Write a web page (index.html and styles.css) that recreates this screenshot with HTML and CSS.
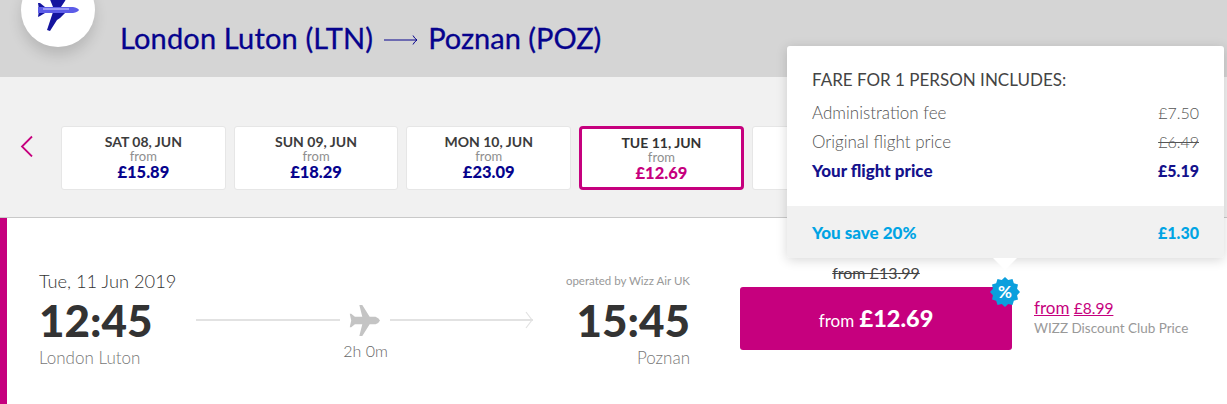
FILE: index.html
```html
<!DOCTYPE html>
<html lang="en">
<head>
<meta charset="utf-8">
<title>London Luton to Poznan</title>
<link rel="stylesheet" href="styles.css">
</head>
<body>
<header class="route">
  <div class="logo">
    <svg class="logo-plane" viewBox="0 0 42 42" width="42" height="42">
      <path fill="#14149e" d="M15 0H22L25 6L30 8L28 12L24 18H16L10 3Z"/>
      <path fill="#14149e" d="M16 23H29L23 29L20 31L13 42L10 41Z"/>
      <path fill="#14149e" d="M1 14H3L8 18V24L3 27L1 28L2 21Z"/>
      <path fill="#5c5ce8" d="M1 18H36Q41 19 42 21Q41 23 36 24H1Z"/>
      <path fill="#9a9af5" d="M6 19H32V21H6Z"/>
    </svg>
  </div>
  <h1 class="route-title">
    <span class="from-city">London Luton (LTN)</span>
    <svg class="route-arrow" viewBox="0 0 34 12" width="34" height="12"><path d="M0 6H33M29 1.500Q30.500 4.500 33 6Q30.500 7.500 29 10.500" fill="none" stroke="#06038d" stroke-width="1"/></svg>
    <span>Poznan (POZ)</span>
  </h1>
</header>

<section class="dates">
  <svg class="prev" viewBox="0 0 14 24" width="14" height="24"><path d="M12 3.500L2 13.500L12 23.500" fill="none" stroke="#c6007e" stroke-width="1.800"/></svg>
  <div class="card"><b class="day">SAT 08, JUN</b><span class="from">from</span><b class="price">£15.89</b></div>
  <div class="card"><b class="day">SUN 09, JUN</b><span class="from">from</span><b class="price">£18.29</b></div>
  <div class="card"><b class="day">MON 10, JUN</b><span class="from">from</span><b class="price">£23.09</b></div>
  <div class="card selected"><b class="day">TUE 11, JUN</b><span class="from">from</span><b class="price">£12.69</b></div>
  <div class="card"></div>
</section>

<section class="flight">
  <div class="leg">
    <div class="date">Tue, 11 Jun 2019</div>
    <div class="time">12:45</div>
    <div class="place">London Luton</div>
  </div>
  <div class="path">
    <div class="path-line">
      <span class="rule"></span>
      <svg class="path-plane" viewBox="0 0 42 42" width="31" height="31">
        <path fill="#c4c4c4" d="M14 0H18L28 16H36Q41 18 42 21Q41 24 36 26H28L18 42H14L18 26H8L3 30H1L3 21L1 12H3L8 16H18Z"/>
      </svg>
      <span class="rule arrow-rule"><svg class="head" viewBox="0 0 8 18" width="8" height="18"><path d="M1 1L7 9L1 17" fill="none" stroke="#e2e2e2" stroke-width="1.200"/></svg></span>
    </div>
    <div class="duration">2h 0m</div>
  </div>
  <div class="leg leg-end">
    <div class="operated">operated by Wizz Air UK</div>
    <div class="time">15:45</div>
    <div class="place">Poznan</div>
  </div>
  <div class="fare">
    <div class="old-fare">from £13.99</div>
    <button class="buy"><span class="buy-from">from</span> <b class="buy-price">£12.69</b>
      <span class="badge">
        <svg viewBox="0 0 30 30" width="30" height="30"><polygon fill="#0b9fdd" points="30,15 27.07,18.24 27.99,22.500 23.84,23.84 22.500,27.99 18.24,27.07 15,30 11.76,27.07 7.500,27.99 6.160,23.84 2.010,22.500 2.930,18.240 0,15 2.930,11.760 2.010,7.500 6.160,6.160 7.500,2.010 11.760,2.930 15,0 18.240,2.930 22.500,2.010 23.840,6.160 27.990,7.500 27.070,11.760"/></svg>
        <b class="badge-text">%</b>
      </span>
    </button>
  </div>
  <div class="club">
    <div class="club-price"><a>from</a> <a class="club-amount">£8.99</a></div>
    <div class="club-label">WIZZ Discount Club Price</div>
  </div>
</section>

<aside class="pop">
  <div class="pop-body">
    <h2 class="pop-title">FARE FOR 1 PERSON INCLUDES:</h2>
    <div class="pop-row"><span>Administration fee</span><span class="val">£7.50</span></div>
    <div class="pop-row"><span>Original flight price</span><s class="val">£6.49</s></div>
    <div class="pop-row pop-strong"><span>Your flight price</span><span class="val">£5.19</span></div>
  </div>
  <div class="pop-save"><span>You save 20%</span><span class="val">£1.30</span></div>
  <span class="pop-tip"></span>
</aside>
</body>
</html>
```
FILE: styles.css
```css
* { box-sizing: border-box; }
html, body { margin: 0; padding: 0; }
body {
  position: relative;
  height: 404px;
  overflow: hidden;
  background: #fff;
  font-family: "Lato", "Liberation Sans", sans-serif;
  color: #333;
  white-space: nowrap;
}

.route {
  display: flex;
  align-items: flex-start;
  height: 77px;
  padding-left: 21px;
  background: #d5d5d5;
}
.logo {
  display: flex;
  align-items: center;
  justify-content: center;
  flex: none;
  width: 74px;
  height: 74px;
  margin-top: -27px;
  border-radius: 50%;
  background: #fff;
  box-shadow: 0 8px 14px rgba(0, 0, 0, .14);
}
.route-title {
  display: flex;
  align-items: center;
  margin: 18px 0 0 25px;
  font-size: 29px;
  line-height: 40px;
  font-weight: 400;
  color: #06038d;
  -webkit-text-stroke: .3px #06038d;
}
.from-city { letter-spacing: .16px; }
.route-arrow { margin: 4px 10px 0 11px; }

.dates {
  display: flex;
  align-items: flex-start;
  gap: 8px;
  height: 141px;
  padding: 49px 0 0 20px;
  background: #f1f1f1;
  border-bottom: 1px solid #c9c9c9;
}
.prev { flex: none; width: 14px; margin: 7px 19px 0 0; }
.card {
  display: flex;
  flex-direction: column;
  align-items: center;
  flex: none;
  width: 164.7px;
  height: 64px;
  padding-top: 7px;
  border: 1px solid #e6e6e6;
  border-radius: 3px;
  background: #fff;
}
.day { font-size: 14px; line-height: 16px; font-weight: 700; color: #3c3c3c; }
.from { font-size: 13px; line-height: 13px; color: #8e8e8e; }
.price { font-size: 16.5px; line-height: 19px; font-weight: 900; color: #06038d; }
.selected { padding-top: 6px; border: 3px solid #c6007e; border-radius: 4px; }
.selected .day { color: #333; }
.selected .price { color: #c6007e; }

.flight {
  display: flex;
  align-items: flex-start;
  height: 186px;
  padding: 52px 0 0 32px;
  border-left: 7px solid #c6007e;
}
.leg { flex: none; width: 130px; }
.leg-end { width: 157px; text-align: right; }
.date { font-size: 18.300px; line-height: 22px; font-weight: 300; color: #333; }
.operated { font-size: 11.500px; line-height: 22px; color: #999; }
.time { margin-top: 3px; font-size: 44px; line-height: 50px; font-weight: 900; color: #333; }
.place { margin-top: 2px; font-size: 17px; line-height: 22px; font-weight: 300; color: #777; }

.path { flex: none; width: 337px; margin: 34px 0 0 27px; }
.path-line { display: flex; align-items: center; height: 32px; }
.rule { flex: 1; height: 2px; background: #e2e2e2; }
.path-plane { flex: none; margin: 0 10px 0 9px; }
.arrow-rule { position: relative; }
.head { position: absolute; right: 0; top: -8px; }
.duration { margin-top: 5px; padding-left: 2px; font-size: 16px; line-height: 20px; font-weight: 300; text-align: center; color: #666; }

.fare { flex: none; width: 272px; margin-left: 50px; }
.old-fare {
  height: 17px;
  font-size: 16px;
  line-height: 6px;
  text-align: center;
  text-decoration: line-through;
  color: #444;
}
.buy {
  position: relative;
  display: block;
  width: 272px;
  height: 63px;
  padding-bottom: 2px;
  border: 0;
  border-radius: 3px;
  background: #c6007e;
  color: #fff;
  font-family: inherit;
}
.buy-from { font-size: 17px; }
.buy-price { font-size: 23.500px; font-weight: 900; margin-left: 2px; }
.badge {
  position: absolute;
  top: -10px;
  right: -8px;
  display: flex;
  width: 30px;
  height: 30px;
}
.badge-text {
  position: absolute;
  inset: 0;
  font-size: 17px;
  line-height: 30px;
  text-align: center;
  color: #fff;
}

.club { flex: none; margin: 26px 0 0 22px; }
.club-price { font-size: 17px; line-height: 24px; color: #c6007e; }
.club-price a { text-decoration: underline; }
.club-amount { font-size: 15.500px; }
.club-label { font-size: 13.500px; line-height: 17px; color: #999; }

.pop {
  position: absolute;
  left: 787px;
  top: 46px;
  width: 437px;
  height: 212px;
  border-radius: 3px;
  background: #fff;
  box-shadow: 0 2px 12px rgba(0, 0, 0, .16);
}
.pop-body { height: 160px; padding: 22px 25px 0; }
.pop-title {
  margin: 0 0 6px;
  font-size: 17px;
  line-height: 24px;
  font-weight: 400;
  color: #444;
}
.pop-row {
  display: flex;
  justify-content: space-between;
  font-size: 17px;
  line-height: 29px;
  font-weight: 300;
  color: #555;
}
.val { font-size: 16px; }
.pop-strong { font-weight: 900; color: #14128c; }
.pop-save {
  display: flex;
  justify-content: space-between;
  align-items: center;
  height: 52px;
  padding: 0 25px;
  background: #f1f1f1;
  font-size: 17px;
  font-weight: 900;
  color: #00a4e4;
  border-radius: 0 0 3px 3px;
}
.pop-tip {
  position: absolute;
  left: 206px;
  top: 212px;
  width: 0;
  height: 0;
  border-left: 12px solid transparent;
  border-right: 12px solid transparent;
  border-top: 12px solid #fff;
}
```
